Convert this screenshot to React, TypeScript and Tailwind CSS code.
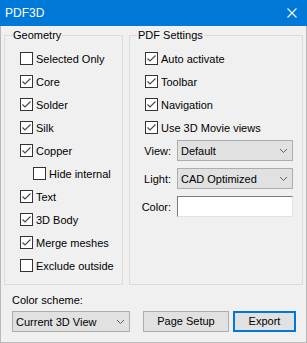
import type { ReactNode } from 'react'

const FONT = { fontFamily: '"Liberation Sans", Arial, sans-serif' }

function Check({ checked, label, indent }: { checked?: boolean; label: string; indent?: boolean }) {
  return (
    <div className={`flex h-[23px] items-center ${indent ? 'ml-[13px]' : ''}`}>
      <span className="flex h-[13px] w-[13px] shrink-0 items-center justify-center border border-[#333333] bg-white">
        {checked && (
          <svg width="11" height="11" viewBox="0 0 11 11">
            <path d="M1.5 5.5 L4 8 L9.5 2.5" fill="none" stroke="#4a4a4a" strokeWidth="1.2" />
          </svg>
        )}
      </span>
      <span className="ml-[3px] text-[11px] leading-[14px] text-black">{label}</span>
    </div>
  )
}

function Chevron() {
  return (
    <svg width="9" height="6" viewBox="0 0 9 6" className="shrink-0">
      <path d="M1 1 L4.5 4.5 L8 1" fill="none" stroke="#606060" strokeWidth="1" />
    </svg>
  )
}

function Select({ value, className }: { value: string; className: string }) {
  return (
    <div
      className={`flex items-center justify-between border border-[#adadad] bg-[#e1e1e1] pl-[3px] pr-[4px] text-[11px] leading-[14px] text-black ${className}`}
    >
      <span>{value}</span>
      <Chevron />
    </div>
  )
}

function Group({ title, className, children }: { title: string; className: string; children: ReactNode }) {
  return (
    <fieldset className={`border border-[#dcdcdc] ${className}`}>
      <legend className="ml-[7px] px-[1px] text-[11px] leading-[14px] text-black">{title}</legend>
      {children}
    </fieldset>
  )
}

function Field({ label, children }: { label: string; children: ReactNode }) {
  return (
    <div className="flex items-center">
      <span className="w-[41px] text-right text-[11px] leading-[14px] text-black">{label}</span>
      <div className="ml-[6px]">{children}</div>
    </div>
  )
}

export default function App() {
  return (
    <div style={FONT} className="flex h-[343px] w-[307px] flex-col border border-t-0 border-[#b9b9b9] bg-[#f0f0f0]">
      <div className="-mx-[1px] flex h-[26px] shrink-0 items-center justify-between bg-[#0078d7] pl-[5px] pr-[10px]">
        <span className="text-[12px] text-white">PDF3D</span>
        <svg width="10" height="10" viewBox="0 0 10 10">
          <path d="M0.5 0.5 L9.5 9.5 M9.5 0.5 L0.5 9.5" stroke="white" strokeWidth="1.1" />
        </svg>
      </div>

      <div className="mt-[2px] flex gap-[6px] pl-[3px]">
        <Group title="Geometry" className="h-[257px] w-[119px]">
          <div className="pl-[15px] pt-[5px]">
            <Check label="Selected Only" />
            <Check checked label="Core" />
            <Check checked label="Solder" />
            <Check checked label="Silk" />
            <Check checked label="Copper" />
            <Check indent label="Hide internal" />
            <Check checked label="Text" />
            <Check checked label="3D Body" />
            <Check checked label="Merge meshes" />
            <Check label="Exclude outside" />
          </div>
        </Group>

        <Group title="PDF Settings" className="h-[257px] w-[174px]">
          <div className="pl-[15px] pt-[5px]">
            <Check checked label="Auto activate" />
            <Check checked label="Toolbar" />
            <Check checked label="Navigation" />
            <Check checked label="Use 3D Movie views" />
          </div>
          <div className="mt-[1px] flex flex-col gap-[7px]">
            <Field label="View:">
              <Select value="Default" className="h-[21px] w-[116px]" />
            </Field>
            <Field label="Light:">
              <Select value="CAD Optimized" className="h-[21px] w-[116px]" />
            </Field>
            <Field label="Color:">
              <div className="h-[21px] w-[116px] border border-[#7a7a7a] border-b-[#e3e3e3] border-r-[#e3e3e3] bg-white" />
            </Field>
          </div>
        </Group>
      </div>

      <div className="mt-[8px] pl-[11px] text-[11px] leading-[14px] text-black">Color scheme:</div>
      <div className="mt-[4px] flex items-center pl-[11px]">
        <Select value="Current 3D View" className="h-[21px] w-[118px]" />
        <button className="ml-[13px] h-[21px] w-[86px] border border-[#adadad] bg-[#e1e1e1] text-[11px] text-black">
          Page Setup
        </button>
        <button className="ml-[4px] h-[21px] w-[63px] border-2 border-[#0078d7] bg-[#e1e1e1] text-[11px] text-black">
          Export
        </button>
      </div>
    </div>
  )
}
